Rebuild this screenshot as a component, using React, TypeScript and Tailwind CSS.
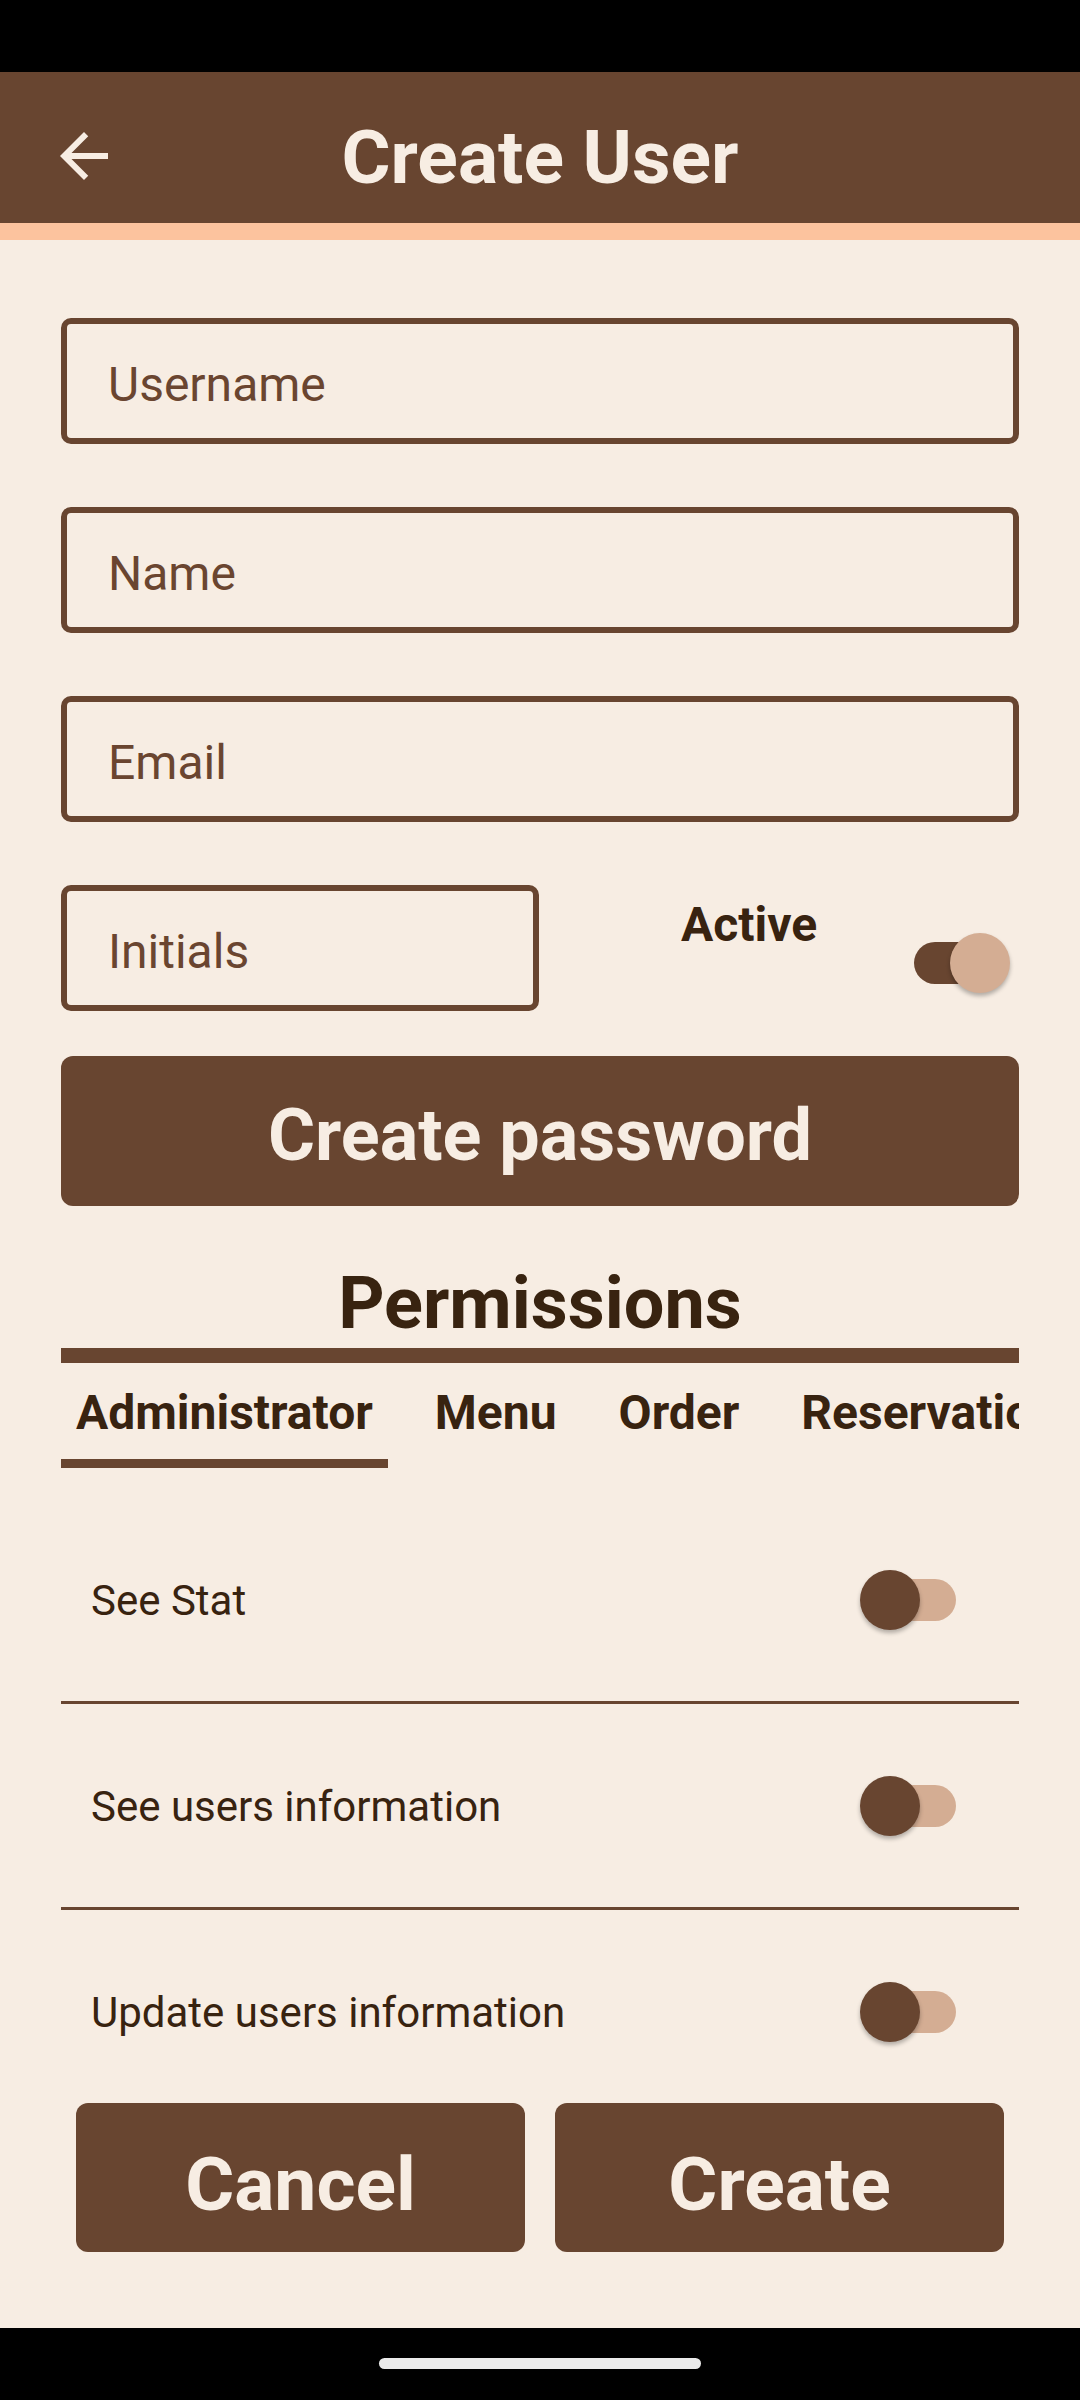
import React from "react";

function Switch({ checked }: { checked: boolean }) {
  return (
    <div className="relative w-[96px] h-[60px] shrink-0">
      {checked ? (
        <>
          <div className="absolute left-0 top-[9px] w-[86px] h-[42px] rounded-full bg-[#684530]" />
          <div className="absolute right-0 top-0 w-[60px] h-[60px] rounded-full bg-[#d4ad93] shadow-[0_3px_4px_rgba(0,0,0,0.28)]" />
        </>
      ) : (
        <>
          <div className="absolute right-0 top-[9px] w-[86px] h-[42px] rounded-full bg-[#d4ad93]" />
          <div className="absolute left-0 top-0 w-[60px] h-[60px] rounded-full bg-[#684530] shadow-[0_3px_4px_rgba(0,0,0,0.28)]" />
        </>
      )}
    </div>
  );
}

function Field({ label, className = "" }: { label: string; className?: string }) {
  return (
    <div
      className={`h-[126px] border-[6px] border-[#684530] rounded-[10px] flex items-center pl-[41px] pt-[8px] text-[48px] leading-[56px] text-[#6a4530] ${className}`}
    >
      {label}
    </div>
  );
}

const rows = ["See Stat", "See users information", "Update users information"];
const tabs = ["Administrator", "Menu", "Order", "Reservation"];

export default function App() {
  return (
    <div
      className="w-[1080px] h-[2400px] flex flex-col bg-[#f7ede3] overflow-hidden"
      style={{ fontFamily: "Roboto, 'Noto Sans', sans-serif" }}
    >
      <div className="h-[72px] bg-black shrink-0" />
      <header className="h-[168px] shrink-0 bg-[#684530] shadow-[inset_0_-17px_0_#fcc39e] grid grid-cols-[1fr_auto_1fr] items-center">
        <div className="pl-[48px] flex items-center">
          <svg width="72" height="72" viewBox="0 0 24 24" fill="#f7ede3">
            <path d="M20 11H7.83l5.59-5.59L12 4l-8 8 8 8 1.41-1.41L7.83 13H20v-2z" />
          </svg>
        </div>
        <h1 className="text-[75px] font-bold leading-[88px] pt-[2px] text-[#f7ede3]">Create User</h1>
        <div />
      </header>

      <main className="flex-1 flex flex-col px-[61px] pt-[78px]">
        <div className="flex flex-col gap-[63px]">
          <Field label="Username" />
          <Field label="Name" />
          <Field label="Email" />
          <div className="flex h-[126px]">
            <Field label="Initials" className="w-[478px] shrink-0" />
            <div className="flex-1 flex items-start">
              <span className="ml-[142px] mt-[12px] text-[48px] font-bold leading-[56px] text-[#382310]">
                Active
              </span>
              <div className="ml-auto mr-[9px] mt-[48px]">
                <Switch checked />
              </div>
            </div>
          </div>
        </div>

        <button className="mt-[45px] h-[150px] rounded-[12px] bg-[#684530] text-[#f7ede3] text-[72px] font-bold leading-[84px] pt-[10px] flex items-center justify-center">
          Create password
        </button>

        <h2 className="mt-[58px] h-[80px] text-center text-[72px] font-bold leading-[80px] text-[#382310]">
          Permissions
        </h2>
        <div className="mt-[4px] h-[15px] bg-[#684530]" />

        <div className="mt-[22px] flex gap-[32px] overflow-hidden whitespace-nowrap">
          {tabs.map((t, i) => (
            <div key={t} className="flex flex-col shrink-0">
              <span className="px-[15px] h-[56px] text-[48px] font-bold leading-[56px] text-[#382310]">{t}</span>
              <div className={`mt-[18px] h-[9px] ${i === 0 ? "bg-[#684530]" : "bg-transparent"}`} />
            </div>
          ))}
        </div>

        <div className="mt-[30px] h-[582px] overflow-hidden flex flex-col">
          {rows.map((r) => (
            <div key={r} className="flex flex-col shrink-0">
              <div className="h-[203px] flex items-center pl-[30px] pr-[63px]">
                <span className="text-[42px] leading-[50px] pt-[2px] text-[#382310]">{r}</span>
                <div className="ml-auto">
                  <Switch checked={false} />
                </div>
              </div>
              <div className="h-[3px] bg-[#684530]" />
            </div>
          ))}
        </div>

        <div className="mt-[23px] flex gap-[30px] px-[15px]">
          <button className="flex-1 h-[149px] rounded-[12px] bg-[#684530] text-[#f7ede3] text-[75px] font-bold leading-[88px] pt-[12px] flex items-center justify-center">
            Cancel
          </button>
          <button className="flex-1 h-[149px] rounded-[12px] bg-[#684530] text-[#f7ede3] text-[75px] font-bold leading-[88px] pt-[12px] flex items-center justify-center">
            Create
          </button>
        </div>
      </main>

      <div className="h-[72px] shrink-0 bg-black flex items-start justify-center pt-[30px]">
        <div className="w-[322px] h-[11px] rounded-full bg-[#ebebeb]" />
      </div>
    </div>
  );
}
